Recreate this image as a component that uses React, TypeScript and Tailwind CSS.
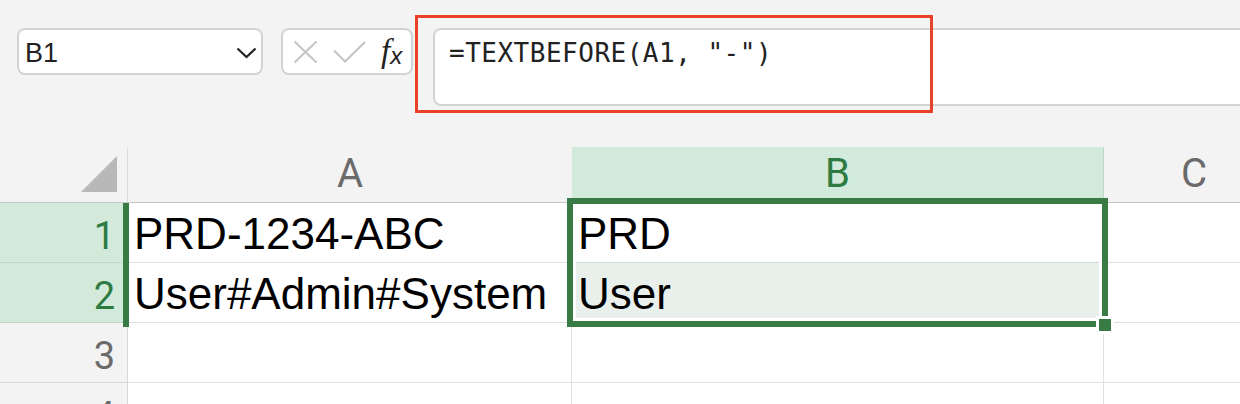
import React from "react";

const GREEN = "#397b45";

const ROWS = [
  { n: 1, a: "PRD-1234-ABC", b: "PRD" },
  { n: 2, a: "User#Admin#System", b: "User" },
  { n: 3, a: "", b: "" },
  { n: 4, a: "", b: "" },
];

const FormulaBar: React.FC = () => (
  <div className="relative h-[147px] pl-[17px] pt-[28px] flex items-start">
    {/* Name box */}
    <div className="w-[246px] h-[47px] bg-white border-2 border-[#d3d3d3] rounded-[8px] flex items-center justify-between pl-[6px] pr-[4px]">
      <span className="text-[27px] text-[#222] font-['Liberation_Sans',sans-serif] mt-[3px]">B1</span>
      <svg width="21" height="12" viewBox="0 0 21 12" className="mt-[2px]">
        <polyline points="1.5,1.5 10.5,10 19.5,1.5" fill="none" stroke="#222" strokeWidth="2.2" />
      </svg>
    </div>

    {/* Cancel / Enter / fx */}
    <div className="ml-[18px] w-[132px] h-[47px] bg-white border-2 border-[#d3d3d3] rounded-[8px] flex items-center pl-[10px]">
      <svg width="25" height="24" viewBox="0 0 25 24" className="mt-[1px]">
        <path d="M1.5 1.5 L23.5 22.5 M23.5 1.5 L1.5 22.5" stroke="#c4c4c4" strokeWidth="2" fill="none" />
      </svg>
      <svg width="33" height="22" viewBox="0 0 33 22" className="ml-[15px] mt-[1px]">
        <polyline points="1,9.5 12,20.5 32,1" stroke="#c4c4c4" strokeWidth="2" fill="none" />
      </svg>
      <span className="ml-[15px] flex items-baseline text-[#222] italic font-['Liberation_Serif',serif] leading-none">
        <span className="text-[33px]">f</span>
        <span className="text-[24px] relative top-[2px] font-['Liberation_Sans',sans-serif]">x</span>
      </span>
    </div>

    {/* Formula input */}
    <div className="ml-[20px] flex-1 -mr-[20px] h-[78px] bg-white border-2 border-[#d3d3d3] rounded-l-[8px] pl-[14px] pt-[8px]">
      <span className="text-[26px] leading-[30px] tracking-[0.5px] text-[#222] font-['DejaVu_Sans_Mono',monospace] whitespace-pre">
        =TEXTBEFORE(A1, "-")
      </span>
    </div>

    {/* Annotation */}
    <div className="absolute left-[415px] top-[15px] w-[518px] h-[98px] border-[3px] border-[#e8412a]" />
  </div>
);

const Grid: React.FC = () => (
  <div className="relative">
    {/* Column headers */}
    <div className="flex h-[56px] border-b border-[#c6c6c6] font-['Roboto',sans-serif]">
      <div className="w-[128px] shrink-0 border-r border-[#dcdcdc] flex justify-end items-end pr-[10px] pb-[10px]">
        <svg width="36" height="36" viewBox="0 0 36 36">
          <polygon points="36,0 36,36 0,36" fill="#b8b8b8" />
        </svg>
      </div>
      <div className="w-[444px] shrink-0 flex justify-center items-end pb-[4px] text-[40px] leading-[48px] text-[#6b6b6b]">
        A
      </div>
      <div className="w-[532px] shrink-0 bg-[#d2eadb] border-r border-[#bcd9c4] flex justify-center items-end pb-[4px] text-[40px] leading-[48px] text-[#2e7b42]">
        B
      </div>
      <div className="w-[180px] shrink-0 flex justify-center items-end pb-[4px] text-[40px] leading-[48px] text-[#6b6b6b]">
        C
      </div>
    </div>

    {/* Rows */}
    {ROWS.map((row) => {
      const sel = row.n <= 2;
      return (
        <div key={row.n} className="flex h-[60px]">
          <div
            className={`w-[128px] shrink-0 border-r border-b flex justify-end items-end pr-[12px] pb-[2px] text-[38px] leading-[48px] font-['Roboto',sans-serif] ${
              sel
                ? "bg-[#d3eadb] border-[#bcd9c4] text-[#2e7b42]"
                : "bg-[#f3f3f3] border-[#d6d6d6] text-[#6b6b6b]"
            }`}
          >
            {row.n}
          </div>
          <div className="w-[444px] shrink-0 bg-white border-r border-b border-[#e1e1e1] flex items-end pl-[6px] pb-[4px] text-[44px] leading-[48px] text-black font-['Liberation_Sans',sans-serif] whitespace-nowrap overflow-hidden">
            {row.a}
          </div>
          <div
            className={`w-[532px] shrink-0 border-r border-b flex items-end pl-[6px] pb-[4px] text-[44px] leading-[48px] text-black font-['Liberation_Sans',sans-serif] ${
              row.n === 2
                ? "bg-[#e9f0eb] border-[#e1e1e1]"
                : row.n === 1
                ? "bg-white border-[#cfd8d1]"
                : "bg-white border-[#e1e1e1]"
            }`}
          >
            {row.b}
          </div>
          <div className="w-[180px] shrink-0 bg-white border-b border-[#e1e1e1]" />
        </div>
      );
    })}

    {/* Row selection bar */}
    <div className="absolute left-[123px] top-[56px] w-[6px] h-[124px]" style={{ backgroundColor: GREEN }} />

    {/* Selection range */}
    <div
      className="absolute left-[567px] top-[51px] w-[541px] h-[129px] border-[6px] shadow-[inset_0_0_0_3px_white]"
      style={{ borderColor: GREEN }}
    />
    {/* Fill handle */}
    <div
      className="absolute left-[1096px] top-[169px] w-[18px] h-[18px] border-[3px] border-white"
      style={{ backgroundColor: GREEN }}
    />
  </div>
);

export default function App() {
  return (
    <div className="w-[1240px] h-[404px] overflow-hidden bg-[#f3f3f3]">
      <FormulaBar />
      <Grid />
    </div>
  );
}
